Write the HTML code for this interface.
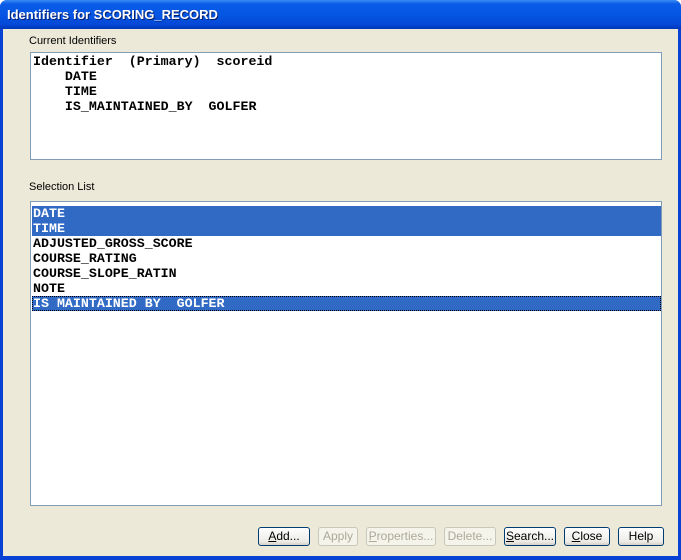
<!DOCTYPE html>
<html><head><style>
body{margin:0;width:681px;height:560px;overflow:hidden;font-family:"Liberation Sans",Tahoma,sans-serif;}
.win{position:absolute;left:0;top:0;width:681px;height:560px;background:#0842d4;border-radius:7px 7px 0 0;}
.title{position:absolute;left:0;top:0;width:681px;height:29px;border-radius:7px 7px 0 0;background:linear-gradient(#3a8cf6 0,#0a5ce8 4px,#0556e4 50%,#0548d6 85%,#0036b8 100%);}
.title span{position:absolute;left:7px;top:7px;color:#fff;font-weight:bold;font-size:13px;text-shadow:1px 1px #0a1f6a;}
.body{position:absolute;left:3px;top:29px;width:675px;height:527px;background:#ece9d8;}
.lbl{position:absolute;font-size:11px;color:#000;}
.box{position:absolute;background:#fff;border:1px solid #7f9db9;}
.mono{font-family:"Liberation Mono",monospace;font-weight:bold;font-size:13.3px;line-height:15px;white-space:pre;color:#000;}
.row{position:absolute;left:1px;width:628px;height:15px;padding-left:1px;}
.sel{background:#316ac5;color:#fff;}
.btn{position:absolute;top:527px;height:17px;border:1px solid #003c74;border-radius:3px;background:linear-gradient(#fff,#ecebe6 80%,#d6d0c5);font-size:12px;text-align:center;line-height:17px;color:#000;}
.dis{border-color:#c9c7ba;color:#aca899;background:#f5f4ea;}
</style></head><body>
<div class="win"></div>
<div class="title"><span>Identifiers for SCORING_RECORD</span></div>
<div class="body"></div>
<div class="lbl" style="left:29px;top:35px">Current Identifiers</div>
<div class="box mono" style="left:30px;top:52px;width:630px;height:106px;padding:0"><div style="position:absolute;left:2px;top:1px">Identifier  (Primary)  scoreid
    DATE
    TIME
    IS_MAINTAINED_BY  GOLFER</div></div>
<div class="lbl" style="left:29px;top:181px">Selection List</div>
<div class="box mono" style="left:30px;top:201px;width:630px;height:303px">
<div class="row sel" style="top:4px">DATE</div>
<div class="row sel" style="top:19px">TIME</div>
<div class="row" style="top:34px">ADJUSTED_GROSS_SCORE</div>
<div class="row" style="top:49px">COURSE_RATING</div>
<div class="row" style="top:64px">COURSE_SLOPE_RATIN</div>
<div class="row" style="top:79px">NOTE</div>
<div class="row sel" style="top:94px;outline:1px dotted #000;outline-offset:-1px">IS MAINTAINED BY  GOLFER</div>
</div>
<div class="btn" style="left:258px;width:50px"><u>A</u>dd...</div>
<div class="btn dis" style="left:318px;width:38px">Apply</div>
<div class="btn dis" style="left:366px;width:68px"><u>P</u>roperties...</div>
<div class="btn dis" style="left:444px;width:50px">Delete...</div>
<div class="btn" style="left:504px;width:50px"><u>S</u>earch...</div>
<div class="btn" style="left:564px;width:44px"><u>C</u>lose</div>
<div class="btn" style="left:618px;width:44px">Help</div>
</body></html>
